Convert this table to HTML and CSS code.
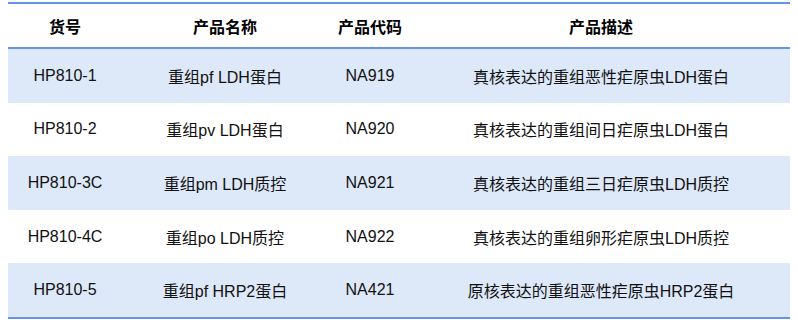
FILE: index.html
```html
<!DOCTYPE html>
<html lang="zh">
<head>
<meta charset="utf-8">
<link rel="stylesheet" href="styles.css">
</head>
<body>
<table class="products">
  <colgroup>
    <col class="c1"><col class="c2"><col class="c3"><col class="c4">
  </colgroup>
  <thead>
    <tr><th>货号</th><th>产品名称</th><th>产品代码</th><th>产品描述</th></tr>
  </thead>
  <tbody>
    <tr class="alt"><td>HP810-1</td><td>重组pf LDH蛋白</td><td>NA919</td><td>真核表达的重组恶性疟原虫LDH蛋白</td></tr>
    <tr><td>HP810-2</td><td>重组pv LDH蛋白</td><td>NA920</td><td>真核表达的重组间日疟原虫LDH蛋白</td></tr>
    <tr class="alt"><td>HP810-3C</td><td>重组pm LDH质控</td><td>NA921</td><td>真核表达的重组三日疟原虫LDH质控</td></tr>
    <tr><td>HP810-4C</td><td>重组po LDH质控</td><td>NA922</td><td>真核表达的重组卵形疟原虫LDH质控</td></tr>
    <tr class="alt"><td>HP810-5</td><td>重组pf HRP2蛋白</td><td>NA421</td><td>原核表达的重组恶性疟原虫HRP2蛋白</td></tr>
  </tbody>
</table>
</body>
</html>
```
FILE: styles.css
```css
html, body {
  margin: 0;
  padding: 0;
  background: #ffffff;
}
body {
  padding: 2px 8px 0 8px;
  font-family: "Liberation Sans", "Noto Sans CJK SC", sans-serif;
  font-size: 16px;
  color: #111;
}
.products {
  width: 782px;
  border-collapse: collapse;
  table-layout: fixed;
  border-top: 2px solid #6495e6;
  border-bottom: 2px solid #6495e6;
}
.c1 { width: 114px; }
.c2 { width: 206px; }
.c3 { width: 84px; }
.c4 { width: 378px; }
.products th {
  height: 43px;
  padding: 0;
  font-weight: bold;
  text-align: center;
  vertical-align: middle;
  color: #000;
  border-bottom: 2px solid #6495e6;
}
.products td {
  height: 53.6px;
  padding: 0;
  text-align: center;
  vertical-align: middle;
  white-space: nowrap;
}
.products tr.alt td {
  background: #dde8f8;
}
```
